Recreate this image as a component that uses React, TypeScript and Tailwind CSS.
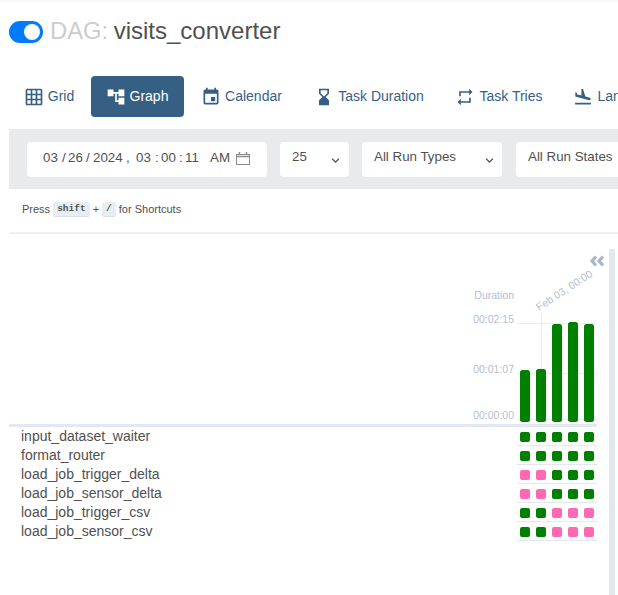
import { MdGridOn, MdAccountTree, MdEvent, MdHourglassBottom, MdRepeat, MdFlightLand, MdKeyboardArrowDown } from "react-icons/md";

const tabs = [
  { label: "Grid", Icon: MdGridOn, w: "w-[82px] pr-[2px]" },
  { label: "Graph", Icon: MdAccountTree, w: "w-[93px] pr-[1px]", active: true },
  { label: "Calendar", Icon: MdEvent, w: "w-[115px]" },
  { label: "Task Duration", Icon: MdHourglassBottom, w: "w-[140px]" },
  { label: "Task Tries", Icon: MdRepeat, w: "w-[120px]" },
  { label: "Landing Times", Icon: MdFlightLand, w: "w-[144px]" },
];

const G = "bg-[#008000]";
const P = "bg-[#ff69b4]";
const rows = [
  { name: "input_dataset_waiter", cells: [G, G, G, G, G] },
  { name: "format_router", cells: [G, G, G, G, G] },
  { name: "load_job_trigger_delta", cells: [P, P, G, G, G] },
  { name: "load_job_sensor_delta", cells: [P, P, G, G, G] },
  { name: "load_job_trigger_csv", cells: [G, G, P, P, P] },
  { name: "load_job_sensor_csv", cells: [G, G, P, P, P] },
];

const dateParts = [
  { t: "03", c: "" },
  { t: "/", c: "ml-[4.200px]" },
  { t: "26", c: "ml-[2.300px]" },
  { t: "/", c: "ml-[3.200px]" },
  { t: "2024", c: "ml-[3.300px]" },
  { t: ",", c: "ml-[3.300px]" },
  { t: "03", c: "ml-[6.300px]" },
  { t: ":", c: "ml-[4.200px]" },
  { t: "00", c: "ml-[2.300px]" },
  { t: ":", c: "ml-[3.200px]" },
  { t: "11", c: "ml-[2.300px]" },
  { t: "AM", c: "ml-[11.200px]" },
];

function Chevron() {
  return <MdKeyboardArrowDown className="text-[#51504f]" size={15} />;
}

function DurationChart() {
  const tick = { fontSize: 10.5, fill: "#b4c0d2", fontFamily: "'Liberation Sans', sans-serif" };
  const bars = [
    [520, 370],
    [536, 369],
    [552, 324],
    [568, 322],
    [584, 324],
  ];
  return (
    <svg width="588" height="175" viewBox="9 249 588 175" className="block overflow-visible">
      <path d="M517 323.500H597M517 373.500H597M517 419.500H597M541.500 314V420" stroke="#e8edf3" strokeWidth="1" fill="none" />
      {bars.map(([x, y]) => (
        <rect key={x} x={x} y={y} width="10" height={422 - y} rx="2.500" fill="#008000" />
      ))}
      <text x="514" y="299" textAnchor="end" style={tick}>Duration</text>
      <text x="514" y="323" textAnchor="end" style={tick}>00:02:15</text>
      <text x="514" y="373" textAnchor="end" style={tick}>00:01:07</text>
      <text x="514" y="419" textAnchor="end" style={tick}>00:00:00</text>
      <text x="539" y="311" transform="rotate(-33 539 311)" style={tick}>Feb 03, 00:00</text>
      <path d="M596 256.500l-4 4.500 4 4.500M603 256.500l-4 4.500 4 4.500" stroke="#a9b6c8" strokeWidth="3.200" fill="none" />
    </svg>
  );
}

export default function App() {
  return (
    <div className="w-[618px] h-[595px] overflow-hidden bg-white text-[#51504f] font-['Liberation_Sans',sans-serif]">
      <div className="h-[2px] bg-[#f8f8f8]" />
      <div className="pl-[9px]">
        <div className="flex items-center h-[58px] pb-[1px]">
          <div className="w-[34px] h-[22px] mt-[2px] rounded-full bg-[#007bff] flex items-center justify-end pr-[3px]">
            <div className="w-[16px] h-[16px] rounded-full bg-white" />
          </div>
          <h4 className="ml-[7px] text-[24px] leading-[29px] font-normal whitespace-nowrap">
            <span className="text-[#cccccc] text-[23.800px]">DAG:</span>
            <span className="ml-[5.500px]">visits_converter</span>
          </h4>
        </div>

        <nav className="flex mt-[16px] h-[41px] w-[700px]">
          {tabs.map(({ label, Icon, w, active }) => (
            <div
              key={label}
              className={`${w} shrink-0 flex items-center justify-center gap-[4px] rounded-[4px] text-[14px] whitespace-nowrap ${
                active ? "bg-[#365f84] text-white" : "text-[#365f84]"
              }`}
            >
              <Icon size={20} />
              <span>{label}</span>
            </div>
          ))}
        </nav>

        <div className="mt-[12px] h-[60px] w-[640px] bg-[#e9eaeb] flex items-center pl-[18px] text-[13.330px]">
          <div className="w-[240px] h-[35px] shrink-0 bg-white rounded-[4px] flex items-center pl-[16px] pb-[3px] whitespace-nowrap">
            {dateParts.map((p, i) => (
              <span key={i} className={p.c}>{p.t}</span>
            ))}
            <svg width="14" height="13" viewBox="0 0 14 13" className="ml-[6px] mt-[1px]" fill="none" stroke="#8b8b8b">
              <rect x="0.500" y="2.500" width="13" height="10" />
              <path d="M0.500 4.500H13.500M3.500 0V3M10.500 0V3" strokeWidth="1.500" />
            </svg>
          </div>
          <div className="ml-[13px] w-[69px] h-[35px] shrink-0 bg-white rounded-[4px] flex items-start justify-between pl-[12px] pr-[6px] pt-[5px]">
            <span>25</span>
            <span className="mt-[6px]"><Chevron /></span>
          </div>
          <div className="ml-[13px] w-[140px] h-[35px] shrink-0 bg-white rounded-[4px] flex items-start justify-between pl-[12px] pr-[5px] pt-[5px]">
            <span>All Run Types</span>
            <span className="mt-[6px]"><Chevron /></span>
          </div>
          <div className="ml-[14px] w-[140px] h-[35px] shrink-0 bg-white rounded-[4px] flex items-start pl-[12px] pt-[5px] whitespace-nowrap">
            <span>All Run States</span>
          </div>
        </div>

        <div className="h-[45px] border-b-2 border-[#edf0f5] pl-[13px] flex items-center text-[11px] pb-[2px] w-[609px]">
          <span>Press</span>
          <kbd className="mx-[3px] h-[15px] px-[4px] rounded-[3px] bg-[#e6edf4] border-b border-[#d3dfeb] font-['Liberation_Mono',monospace] font-bold text-[9.500px] text-[#51504f] flex items-center">shift</kbd>
          <span>+</span>
          <kbd className="mx-[3px] h-[15px] px-[4px] rounded-[3px] bg-[#e6edf4] border-b border-[#d3dfeb] font-['Liberation_Mono',monospace] font-bold text-[9.500px] text-[#51504f] flex items-center">/</kbd>
          <span>for Shortcuts</span>
        </div>

        <div className="flex mt-[15px] items-stretch h-[346px]">
          <div className="w-[588px] shrink-0">
            <DurationChart />
            <div className="h-[3px] bg-[#e2e8f0]" />
            {rows.map((r) => (
              <div key={r.name} className="flex h-[19px]">
                <div className="w-[508px] pl-[12px] pt-[1px] text-[14px] leading-[17px] whitespace-nowrap">{r.name}</div>
                <div className="w-[80px] border-b border-[#e2e8f0] flex gap-[6px] pl-[3px] pt-[5px] items-start">
                  {r.cells.map((c, i) => (
                    <div key={i} className={`w-[10px] h-[10px] rounded-[2px] ${c}`} />
                  ))}
                </div>
              </div>
            ))}
          </div>
          <div className="ml-[12px] w-[6px] bg-[#e2e8f0]" />
        </div>
      </div>
    </div>
  );
}
